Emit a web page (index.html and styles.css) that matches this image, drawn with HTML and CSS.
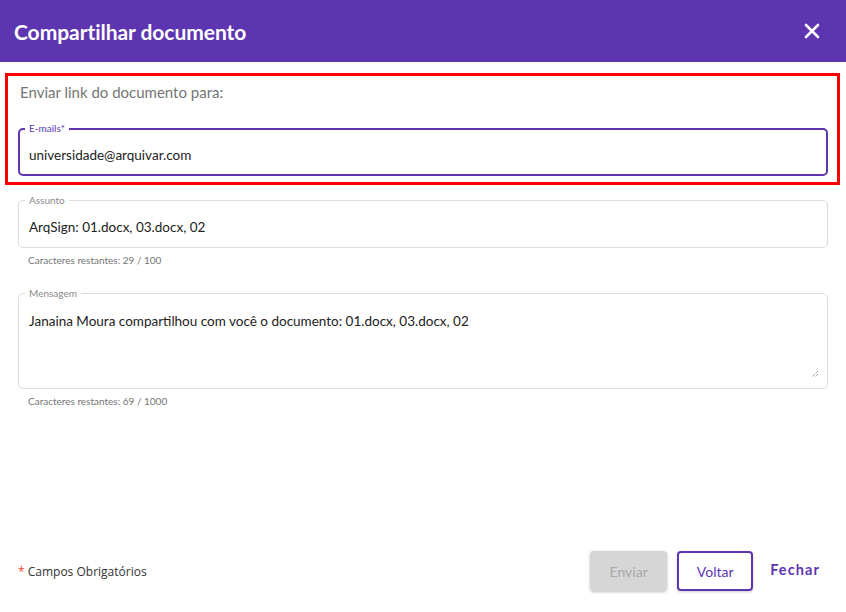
FILE: index.html
```html
<!DOCTYPE html>
<html lang="pt">
<head>
<meta charset="utf-8">
<link rel="stylesheet" href="styles.css">
</head>
<body>
<div class="dialog">
  <header class="header">
    <h1 class="title">Compartilhar documento</h1>
    <button class="close" aria-label="Fechar">
      <svg width="16" height="16" viewBox="0 0 16 16"><path d="M2 2 L14 14 M14 2 L2 14" stroke="#fff" stroke-width="2.6" stroke-linecap="round"/></svg>
    </button>
  </header>
  <main class="content">
    <section class="highlight">
      <p class="intro">Enviar link do documento para:</p>
      <div class="field field-active">
        <span class="label">E-mails*</span>
        <div class="value">universidade@arquivar.com</div>
      </div>
    </section>
    <div class="group">
      <div class="field">
        <span class="label">Assunto</span>
        <div class="value">ArqSign: 01.docx, 03.docx, 02</div>
      </div>
      <p class="helper">Caracteres restantes: 29 / 100</p>
    </div>
    <div class="group">
      <div class="field field-area">
        <span class="label">Mensagem</span>
        <div class="value">Janaina Moura compartilhou com você o documento: 01.docx, 03.docx, 02</div>
        <svg class="grip" width="8" height="8" viewBox="0 0 8 8"><path d="M7 1 L1 7 M7 4 L4 7" stroke="#777" stroke-width="1" stroke-dasharray="1 1"/></svg>
      </div>
      <p class="helper">Caracteres restantes: 69 / 1000</p>
    </div>
  </main>
  <footer class="footer">
    <p class="required"><span class="star">*</span> Campos Obrigatórios</p>
    <div class="actions">
      <button class="btn btn-disabled">Enviar</button>
      <button class="btn btn-outline">Voltar</button>
      <button class="btn btn-text">Fechar</button>
    </div>
  </footer>
</div>
</body>
</html>
```
FILE: styles.css
```css
* { box-sizing: border-box; }
html, body { margin: 0; padding: 0; background: #fff; }
body { font-family: "Lato", "Noto Sans", sans-serif; color: #222; }
.dialog { width: 846px; height: 612px; display: flex; flex-direction: column; }
.header {
  height: 62px; background: #5e35b1; display: flex; align-items: center;
  justify-content: space-between; padding: 0 26px 0 14px;
}
.title { margin: 0; color: #fff; font-size: 21px; font-weight: 700; letter-spacing: -0.05px; }
.close { background: none; border: 0; padding: 0; display: flex; cursor: pointer; }
.content { padding: 11px 6px 0 5px; flex: 1; }
.highlight { border: 3px solid #f00; padding: 7px 9px 6px 10px; }
.intro { margin: 0 0 27px 2px; font-size: 15px; color: #757575; line-height: 18px; }
.field {
  position: relative; border: 1px solid #dcdcdc; border-radius: 5px;
  height: 48px; padding: 6px 10px 0; display: flex; align-items: center;
}
.field-active { border: 2px solid #5e35b1; padding: 6px 9px 0; }
.label {
  position: absolute; top: -7px; left: 6px; background: #fff; padding: 0 4px;
  font-size: 10px; line-height: 12px; color: #8a8a8a;
}
.field-active .label { color: #5e35b1; left: 5px; top: -8px; }
.value { font-size: 13.5px; color: #222; line-height: 17px; }
.group { margin: 15px 12px 0 13px; }
.group + .group { margin-top: 27px; }
.helper { margin: 6px 0 0 10px; font-size: 10px; color: #757575; line-height: 12px; }
.field-area { height: 96px; align-items: flex-start; padding-top: 19px; }
.grip { position: absolute; right: 8px; bottom: 10px; }
.footer {
  display: flex; align-items: center; justify-content: space-between;
  padding: 0 26px 0 18px; height: 80px; margin-bottom: 0;
}
.required { margin: 0 0 2px; font-family: "Open Sans", sans-serif; font-size: 12px; color: #333; }
.star { color: #f44336; }
.actions { display: flex; align-items: center; gap: 10px; margin-bottom: 2px; }
.btn { font-family: "Lato", sans-serif; font-size: 14px; height: 40px; border-radius: 4px; cursor: pointer; }
.btn-disabled { width: 77px; background: #d6d6d6; color: #a8a8a8; border: 0; box-shadow: 0 1px 3px rgba(0,0,0,0.25); }
.btn-outline { width: 76px; background: #fff; color: #5e35b1; border: 2px solid #5e35b1; box-shadow: 0 1px 3px rgba(0,0,0,0.2); }
.btn-text { background: none; border: 0; color: #5e35b1; font-weight: 700; font-size: 14.5px; letter-spacing: 1.1px; padding: 0 0 0 7px; margin-top: -4px; }
```
